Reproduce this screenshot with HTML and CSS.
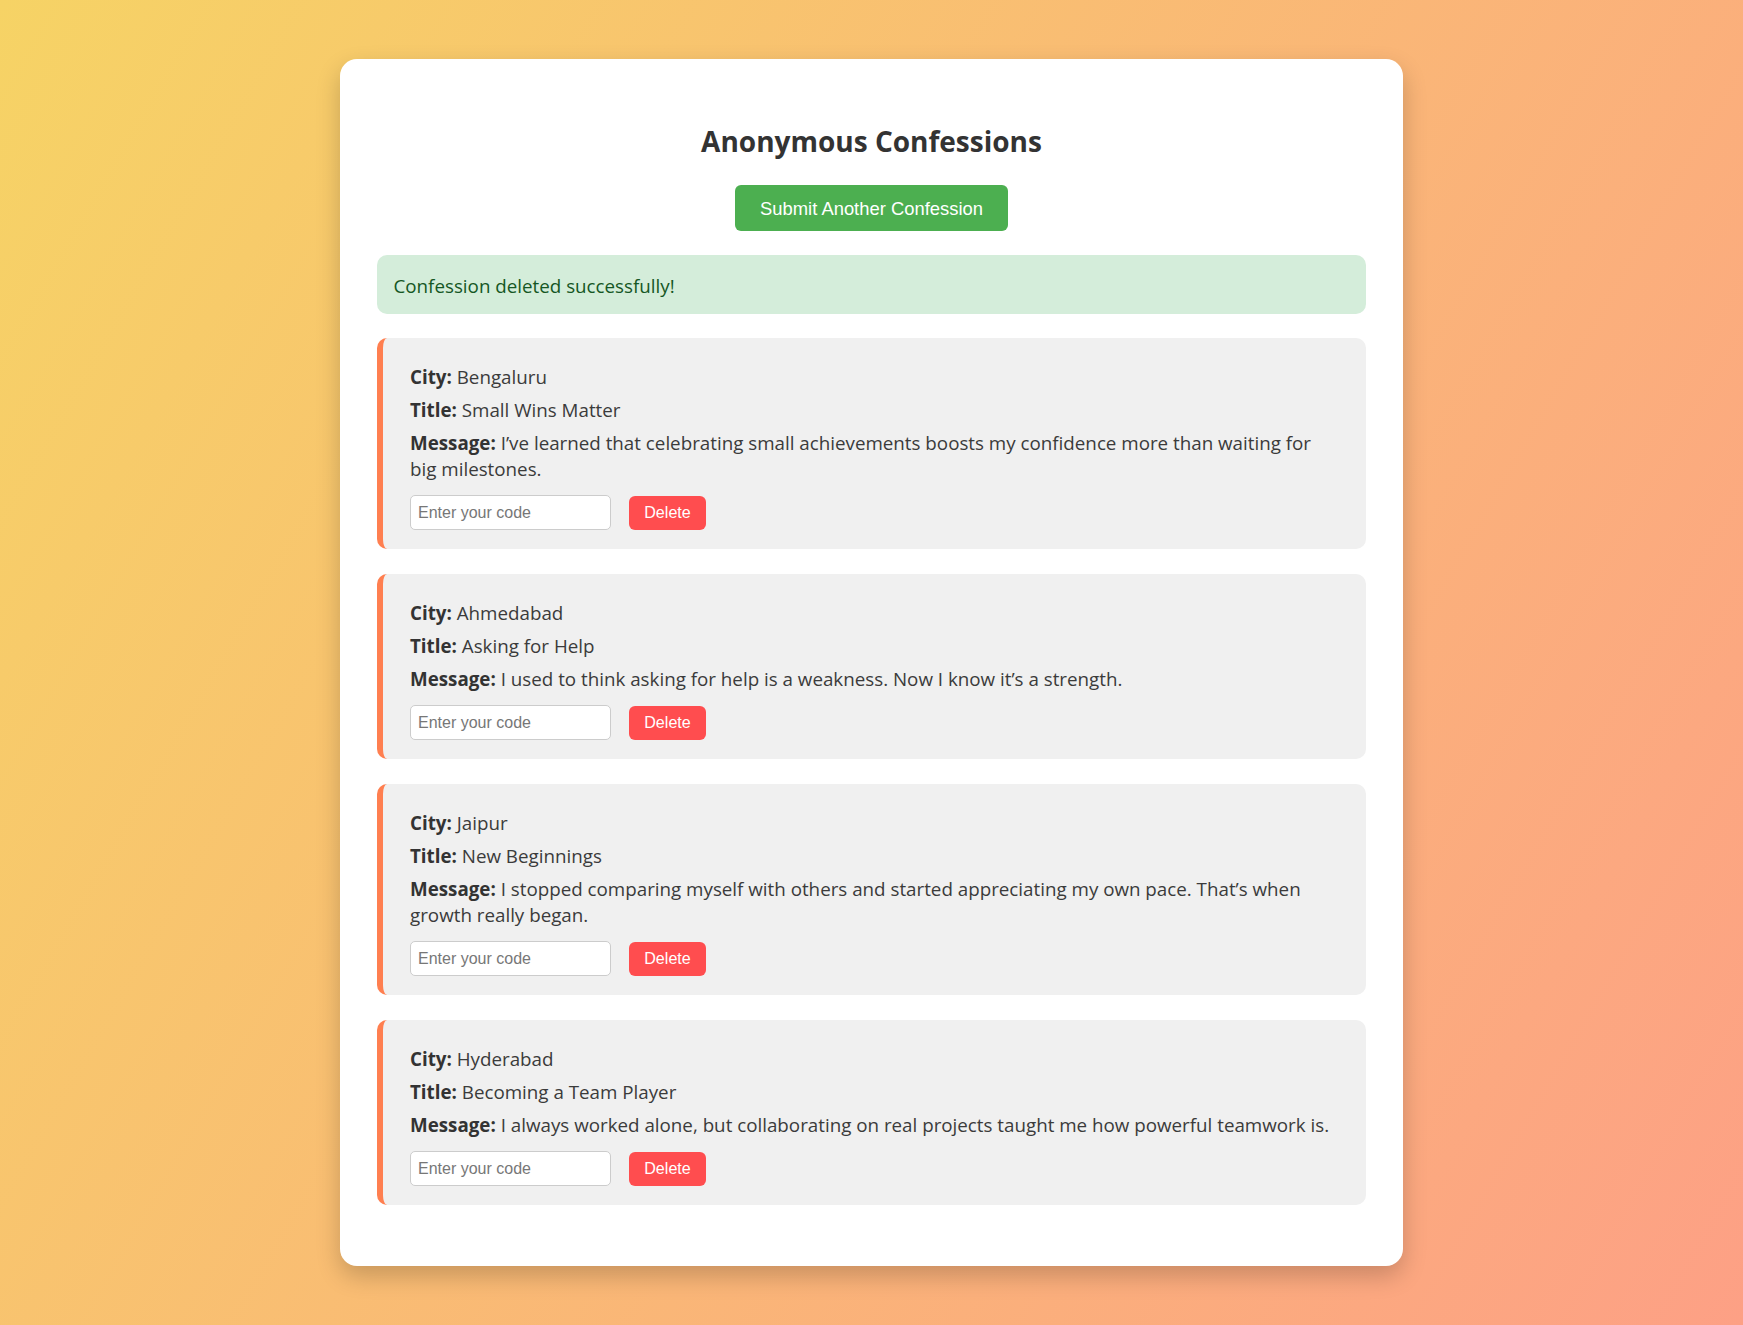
FILE: index.html
```html
<!DOCTYPE html>
<html lang="en">
<head>
<meta charset="UTF-8">
<title>Anonymous Confessions</title>
<link rel="stylesheet" href="styles.css">
</head>
<body>
<main class="container">
  <h2 class="page-title">Anonymous Confessions</h2>
  <button class="btn-submit" type="button">Submit Another Confession</button>
  <div class="alert">Confession deleted successfully!</div>

  <section class="confession">
    <p><strong>City:</strong> Bengaluru</p>
    <p><strong>Title:</strong> Small Wins Matter</p>
    <p><strong>Message:</strong> I’ve learned that celebrating small achievements boosts my confidence more than waiting for big milestones.</p>
    <form class="actions">
      <input class="code-input" type="text" placeholder="Enter your code">
      <button class="btn-delete" type="button">Delete</button>
    </form>
  </section>

  <section class="confession">
    <p><strong>City:</strong> Ahmedabad</p>
    <p><strong>Title:</strong> Asking for Help</p>
    <p><strong>Message:</strong> I used to think asking for help is a weakness. Now I know it’s a strength.</p>
    <form class="actions">
      <input class="code-input" type="text" placeholder="Enter your code">
      <button class="btn-delete" type="button">Delete</button>
    </form>
  </section>

  <section class="confession">
    <p><strong>City:</strong> Jaipur</p>
    <p><strong>Title:</strong> New Beginnings</p>
    <p><strong>Message:</strong> I stopped comparing myself with others and started appreciating my own pace. That’s when growth really began.</p>
    <form class="actions">
      <input class="code-input" type="text" placeholder="Enter your code">
      <button class="btn-delete" type="button">Delete</button>
    </form>
  </section>

  <section class="confession">
    <p><strong>City:</strong> Hyderabad</p>
    <p><strong>Title:</strong> Becoming a Team Player</p>
    <p><strong>Message:</strong> I always worked alone, but collaborating on real projects taught me how powerful teamwork is.</p>
    <form class="actions">
      <input class="code-input" type="text" placeholder="Enter your code">
      <button class="btn-delete" type="button">Delete</button>
    </form>
  </section>
</main>
</body>
</html>
```

FILE: styles.css
```css
html, body {
  margin: 0;
  padding: 0;
}

body {
  min-height: 100vh;
  background: linear-gradient(120deg, #f6d365 0%, #fda085 100%);
  font-family: "Open Sans", "Noto Sans", sans-serif;
  color: #333;
  padding: 59px 0 59px;
  box-sizing: border-box;
}

.container {
  width: 1063px;
  margin: 0 auto;
  background: #fff;
  border-radius: 17px;
  padding: 37px 37px 36px;
  box-sizing: border-box;
  box-shadow: 0 10px 25px rgba(0, 0, 0, 0.2);
}

.page-title {
  margin: 26px 0 25px;
  text-align: center;
  font-size: 28px;
  font-weight: 700;
  color: #333;
}

.btn-submit {
  display: block;
  margin: 0 auto;
  padding: 12.5px 25.5px;
  font-family: "Liberation Sans", Arial, sans-serif;
  font-size: 18.4px;
  line-height: 21px;
  color: #fff;
  background: #4caf50;
  border: none;
  border-radius: 6px;
}

.alert {
  margin-top: 24px;
  margin-bottom: 24px;
  padding: 18px 16.5px 15px;
  background: #d4edda;
  color: #155724;
  border-radius: 10px;
  font-size: 18.78px;
  line-height: 26px;
}

.confession {
  background: #f0f0f0;
  border-left: 6px solid #ff7f50;
  border-radius: 10px;
  padding: 19px 31px 19px 27px;
  margin-bottom: 25px;
  font-size: 18.78px;
  line-height: 26px;
  color: #3b3b3b;
}

.confession p {
  margin: 7px 0;
}

.confession strong {
  color: #333;
}

.actions {
  display: flex;
  align-items: center;
  gap: 18px;
  margin: 13px 0 0;
}

.code-input {
  width: 201px;
  height: 35px;
  box-sizing: border-box;
  padding: 0 7px;
  border: 1px solid #ccc;
  border-radius: 5px;
  background: #fff;
  font-family: "Liberation Sans", Arial, sans-serif;
  font-size: 16px;
  color: #333;
}

.code-input::placeholder {
  color: #777;
}

.btn-delete {
  width: 77px;
  height: 34px;
  padding: 0;
  border: none;
  border-radius: 6px;
  background: #ff4d4f;
  color: #fff;
  font-family: "Liberation Sans", Arial, sans-serif;
  font-size: 16.1px;
}
```
